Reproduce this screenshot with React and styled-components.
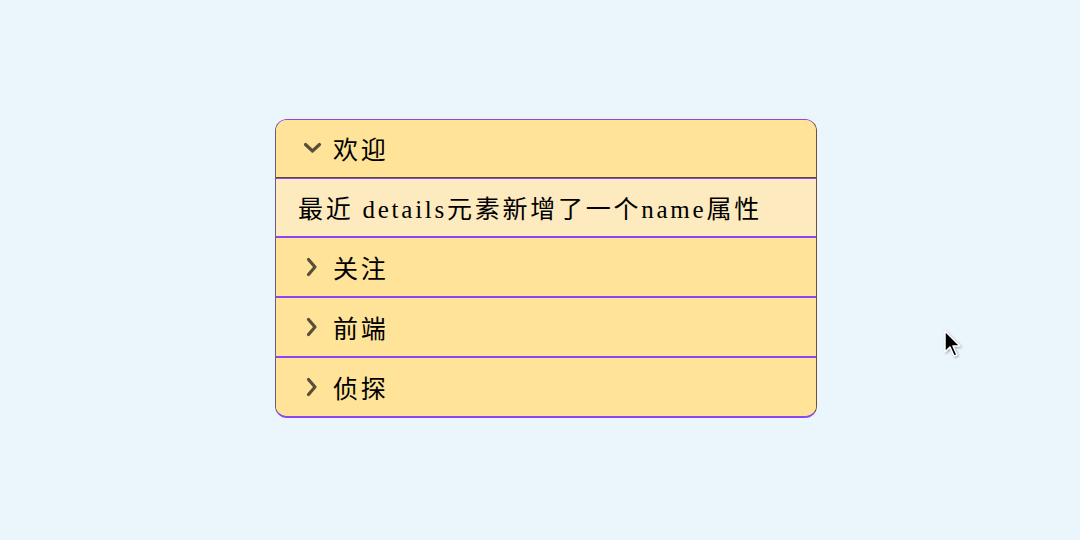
import React from 'react';
import styled, { createGlobalStyle } from 'styled-components';

const GlobalStyle = createGlobalStyle`
  html, body {
    margin: 0;
    padding: 0;
    background: #eaf5fc;
  }
  body {
    font-family: "Liberation Serif", "Noto Sans CJK SC", serif;
  }
`;

const Page = styled.div`
  width: 1080px;
  height: 540px;
  display: flex;
  align-items: center;
  justify-content: center;
  padding-left: 12px;
  padding-bottom: 4px;
  box-sizing: border-box;
  position: relative;
`;

const Card = styled.div`
  width: 542px;
  box-sizing: border-box;
  border: 1px solid #8a45f5;
  border-bottom-width: 2px;
  border-left-color: #6a5a8a;
  border-right-color: #6e5234;
  border-radius: 12px;
  overflow: hidden;
  background: #fee398;
`;

const Item = styled.details`
  border-top: ${(p) => (p.$first ? 'none' : '2px solid #8a45f5')};
`;

const Summary = styled.summary`
  list-style: none;
  display: flex;
  align-items: center;
  height: 58px;
  padding-left: ${(p) => (p.$open ? '27px' : '30px')};
  gap: ${(p) => (p.$open ? '11px' : '15px')};
  font-size: 25px;
  letter-spacing: 2.75px;
  color: #000;
  background: #fee398;
  cursor: pointer;
  box-sizing: border-box;
  border-bottom: ${(p) => (p.$open ? '1px solid #5a4a30' : 'none')};
  &::-webkit-details-marker {
    display: none;
  }
`;

const Body = styled.div`
  height: 58px;
  display: flex;
  align-items: center;
  padding-left: 22px;
  font-size: 25px;
  letter-spacing: 2.75px;
  color: #000;
  background: #fdeabf;
  border-top: 1px solid #8a45f5;
  box-sizing: border-box;
`;

const Chevron = ({ open }) =>
  open ? (
    <svg width="19" height="12" viewBox="0 0 19 12">
      <path d="M2.5 2.5 L9.5 9 L16.5 2.5" fill="none" stroke="#5a4e38" strokeWidth="3.2" strokeLinecap="round" strokeLinejoin="round" />
    </svg>
  ) : (
    <svg width="12" height="20" viewBox="0 0 12 20">
      <path d="M2.5 2.5 L9 10 L2.5 17.5" fill="none" stroke="#5a4e38" strokeWidth="3.2" strokeLinecap="round" strokeLinejoin="round" />
    </svg>
  );

const Cursor = styled.svg`
  position: absolute;
  left: 944px;
  top: 330px;
  filter: drop-shadow(1px 1px 1px rgba(0, 0, 0, 0.3));
`;

const items = [
  { title: '欢迎', open: true, body: '最近 details元素新增了一个name属性' },
  { title: '关注' },
  { title: '前端' },
  { title: '侦探' },
];

export default function App() {
  return (
    <>
      <GlobalStyle />
      <Page>
        <Card>
          {items.map((it, i) => (
            <Item key={it.title} $first={i === 0} open={it.open}>
              <Summary $open={it.open}>
                <Chevron open={it.open} />
                <span>{it.title}</span>
              </Summary>
              {it.body && <Body>{it.body}</Body>}
            </Item>
          ))}
        </Card>
        <Cursor width="20" height="30" viewBox="0 0 20 30">
          <path d="M1 1 L1 22 L6 17 L10 26 L13 25 L9 16 L16 16 Z" fill="#000" stroke="#fff" strokeWidth="1.5" strokeLinejoin="round" />
        </Cursor>
      </Page>
    </>
  );
}
